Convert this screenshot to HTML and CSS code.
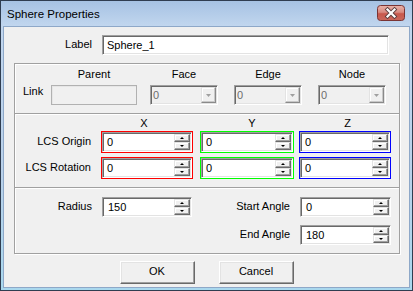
FILE: index.html
```html
<!DOCTYPE html>
<html>
<head>
<meta charset="utf-8">
<title>Sphere Properties</title>
<link rel="stylesheet" href="styles.css">
</head>
<body>
<div class="window">
  <div class="titlebar">
    <span class="title">Sphere Properties</span>
    <div class="close">
      <svg width="28" height="16" viewBox="0 0 28 16">
        <defs>
          <linearGradient id="cg" x1="0" y1="0" x2="0" y2="1">
            <stop offset="0" stop-color="#e9b3aa"/>
            <stop offset="0.45" stop-color="#d88a80"/>
            <stop offset="0.55" stop-color="#c8584c"/>
            <stop offset="1" stop-color="#c9685c"/>
          </linearGradient>
        </defs>
        <rect x="0.5" y="0.5" width="27" height="15" rx="3" fill="url(#cg)" stroke="#7a3434"/>
        <path d="M10.5 4.5 L17.5 11.5 M17.5 4.5 L10.5 11.5" stroke="#5b3d3d" stroke-width="4" stroke-linecap="square"/>
        <path d="M10.5 4.5 L17.5 11.5 M17.5 4.5 L10.5 11.5" stroke="#ffffff" stroke-width="2.2" stroke-linecap="square"/>
      </svg>
    </div>
  </div>
  <div class="client">
    <div class="label-row">
      <span class="lbl">Label</span>
      <div class="edit"><span class="val">Sphere_1</span></div>
    </div>

    <div class="group g-link">
      <span></span>
      <div class="hdr hp">Parent</div>
      <div class="hdr hc">Face</div>
      <div class="hdr hc">Edge</div>
      <div class="hdr hc">Node</div>

      <span class="link-lbl">Link</span>
      <div class="pbox"></div>
      <div class="combo"><span class="val">0</span><div class="dd"><svg width="5" height="3" viewBox="0 0 5 3"><polygon points="0,0 5,0 2.5,3" fill="#a0a0a0"/></svg></div></div>
      <div class="combo"><span class="val">0</span><div class="dd"><svg width="5" height="3" viewBox="0 0 5 3"><polygon points="0,0 5,0 2.5,3" fill="#a0a0a0"/></svg></div></div>
      <div class="combo"><span class="val">0</span><div class="dd"><svg width="5" height="3" viewBox="0 0 5 3"><polygon points="0,0 5,0 2.5,3" fill="#a0a0a0"/></svg></div></div>
    </div>

    <div class="group g-lcs">
      <span></span>
      <div class="hdr hx">X</div>
      <div class="hdr hy">Y</div>
      <div class="hdr hz">Z</div>

      <span class="lbl lcs-lbl">LCS Origin</span>
      <div class="cbox red w92"><div class="spin"><span class="val">0</span><div class="btns"><div class="sb"><i class="up"></i></div><div class="sb"><i class="down"></i></div></div></div></div>
      <div class="cbox green w94"><div class="spin"><span class="val">0</span><div class="btns"><div class="sb"><i class="up"></i></div><div class="sb"><i class="down"></i></div></div></div></div>
      <div class="cbox blue w92"><div class="spin"><span class="val">0</span><div class="btns"><div class="sb"><i class="up"></i></div><div class="sb"><i class="down"></i></div></div></div></div>

      <span class="lbl lcs-lbl">LCS Rotation</span>
      <div class="cbox red w92"><div class="spin"><span class="val">0</span><div class="btns"><div class="sb"><i class="up"></i></div><div class="sb"><i class="down"></i></div></div></div></div>
      <div class="cbox green w94"><div class="spin"><span class="val">0</span><div class="btns"><div class="sb"><i class="up"></i></div><div class="sb"><i class="down"></i></div></div></div></div>
      <div class="cbox blue w92"><div class="spin"><span class="val">0</span><div class="btns"><div class="sb"><i class="up"></i></div><div class="sb"><i class="down"></i></div></div></div></div>
    </div>

    <div class="group g-geo">
      <span class="lbl geo-lbl">Radius</span>
      <div class="spin edit-spin"><span class="val">150</span><div class="btns"><div class="sb"><i class="up"></i></div><div class="sb"><i class="down"></i></div></div></div>
      <span class="lbl geo-lbl">Start Angle</span>
      <div class="spin edit-spin"><span class="val">0</span><div class="btns"><div class="sb"><i class="up"></i></div><div class="sb"><i class="down"></i></div></div></div>

      <span class="r2c3 lbl geo-lbl">End Angle</span>
      <div class="r2c4 spin edit-spin"><span class="val">180</span><div class="btns"><div class="sb"><i class="up"></i></div><div class="sb"><i class="down"></i></div></div></div>
    </div>

    <div class="buttons">
      <div class="btn">OK</div>
      <div class="btn">Cancel</div>
    </div>
  </div>
</div>
</body>
</html>
```

FILE: styles.css
```css
html, body {
  margin: 0;
  padding: 0;
}
body {
  font-family: "Liberation Sans", Arial, sans-serif;
  font-size: 11px;
  color: #000;
  background: #ffffff;
}
.window {
  width: 413px;
  height: 291px;
  box-sizing: border-box;
  border: 1px solid #2f3d50;
  padding: 0 2px 2px 2px;
  background: linear-gradient(to bottom, #a6c2e3 0px, #c1d6ee 25px, #b9d1ea 60%, #a9d8ee 100%);
  display: flex;
  flex-direction: column;
}
.titlebar {
  height: 25px;
  flex: none;
  display: flex;
  align-items: center;
  justify-content: space-between;
  padding-left: 4px;
}
.title {
  font-size: 11.5px;
  color: #000;
}
.close {
  align-self: flex-start;
  margin-top: 4px;
  margin-right: 5px;
  width: 28px;
  height: 16px;
}
.close svg { display: block; }

.client {
  flex: 1;
  background: #f0f0f0;
  border: 1px solid #8ea8c8;
  display: flex;
  flex-direction: column;
}

.lbl {
  text-align: right;
  padding-bottom: 3px;
  white-space: nowrap;
}

/* Label row */
.label-row {
  display: grid;
  grid-template-columns: 88px 287px;
  column-gap: 10px;
  align-items: center;
  margin-top: 8px;
}

/* sunken edit */
.edit, .spin, .combo {
  box-sizing: border-box;
  height: 20px;
  border: 1px solid;
  border-color: #a0a0a0 #ffffff #ffffff #a0a0a0;
  box-shadow: inset 1px 1px 0 #696969, inset -1px -1px 0 #e3e3e3;
  padding: 1px;
  display: flex;
  align-items: stretch;
  background: #fff;
}
.val {
  flex: 1;
  display: flex;
  align-items: center;
  padding-left: 3px;
  white-space: nowrap;
}

/* group boxes */
.group {
  border: 1px solid #a0a0a0;
  box-shadow: inset 1px 1px 0 #ffffff, 1px 1px 0 #ffffff;
  margin: 0 9px 0 10px;
}

/* Link group */
.g-link {
  margin-top: 8px;
  padding: 4px 0 8px 8px;
  display: grid;
  grid-template-columns: 28px 99px 84px 84px 68px;
  grid-template-rows: 13px 20px;
  row-gap: 4px;
}
.hdr {
  line-height: 13px;
  text-align: center;
  white-space: nowrap;
}
.hp { width: 86px; }
.hc { width: 68px; }
.link-lbl {
  align-self: start;
}
.pbox {
  box-sizing: border-box;
  width: 86px;
  height: 20px;
  border: 1px solid #b1b1b1;
  box-shadow: inset 1px 1px 0 #e6e6e6;
  background: #f0f0f0;
}
.combo {
  width: 68px;
  background: #f0f0f0;
}
.combo .val {
  color: #6d6d6d;
  padding-left: 1px;
}
.dd {
  width: 15px;
  box-sizing: border-box;
  border: 1px solid;
  border-color: #e3e3e3 #8a8a8a #8a8a8a #e3e3e3;
  box-shadow: inset -1px -1px 0 #c8c8c8, inset 1px 1px 0 #ffffff;
  background: #f0f0f0;
  display: flex;
  align-items: center;
  justify-content: center;
}
.dd svg { display: block; }

/* LCS group */
.g-lcs {
  margin-top: -1px;
  padding: 3px 0 8px 0;
  display: grid;
  grid-template-columns: 86px 99px 99px 92px;
  grid-template-rows: 10px 22px 22px;
  row-gap: 4px;
  align-items: start;
}
.g-lcs .hdr { align-self: start; }
.hx { width: 92px; padding-right: 6px; box-sizing: border-box; }
.hy { width: 94px; padding-left: 10px; box-sizing: border-box; }
.hz { width: 92px; padding-left: 5px; box-sizing: border-box; }
.lcs-lbl {
  padding-right: 10px;
  align-self: center;
}
.cbox {
  box-sizing: border-box;
  height: 22px;
  border: 1px solid;
}
.cbox .spin { height: 20px; }
.red { border-color: #ff0000; }
.green { border-color: #00ff00; }
.blue { border-color: #0000ff; }
.w92 { width: 92px; }
.w94 { width: 94px; }

/* spinner buttons */
.btns {
  width: 16px;
  display: flex;
  flex-direction: column;
}
.sb {
  flex: 1;
  box-sizing: border-box;
  border: 1px solid;
  border-color: #e3e3e3 #696969 #696969 #e3e3e3;
  box-shadow: inset -1px -1px 0 #a0a0a0, inset 1px 1px 0 #ffffff;
  background: #f0f0f0;
  display: flex;
  align-items: center;
  justify-content: center;
}
.up, .down {
  display: block;
  width: 0;
  height: 0;
  border-left: 2px solid transparent;
  border-right: 2px solid transparent;
}
.up { border-bottom: 2px solid #000; }
.down { border-top: 2px solid #000; }

/* geometry group */
.g-geo {
  margin-top: -1px;
  padding: 9px 0 8px 0;
  display: grid;
  grid-template-columns: 77px 90px 88px 91px;
  grid-template-rows: 20px 20px;
  column-gap: 10px;
  row-gap: 8px;
  align-items: center;
}
.edit-spin .val { padding-left: 4px; }
.r2c3 { grid-column: 3; grid-row: 2; }
.r2c4 { grid-column: 4; grid-row: 2; }

/* dialog buttons */
.buttons {
  margin-top: 7px;
  display: flex;
  justify-content: center;
  gap: 24px;
}
.btn {
  width: 75px;
  height: 23px;
  box-sizing: border-box;
  border: 1px solid;
  border-color: #ffffff #696969 #696969 #ffffff;
  box-shadow: inset -1px -1px 0 #a0a0a0, inset 1px 1px 0 #e3e3e3;
  background: #f0f0f0;
  display: flex;
  align-items: center;
  justify-content: center;
  padding-bottom: 3px;
}
```
